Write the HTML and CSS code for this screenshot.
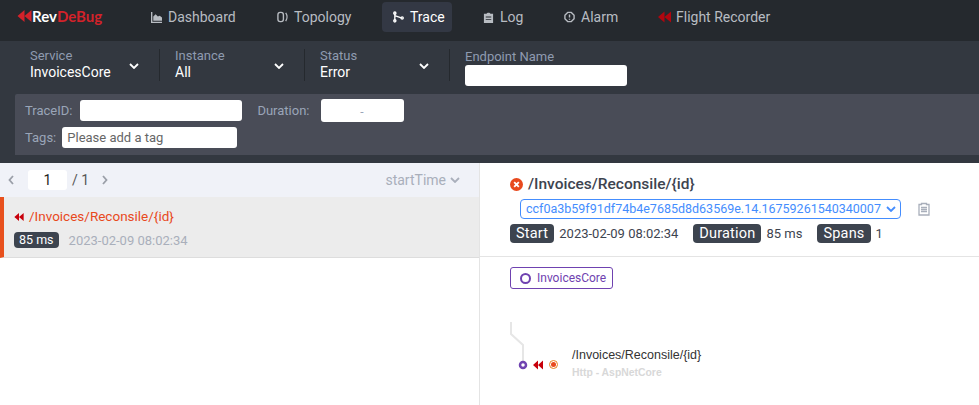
FILE: index.html
```html
<!DOCTYPE html>
<html>
	<head>
		<meta charset="utf-8">
		<title>RevDeBug Trace</title>
		<link rel="stylesheet" href="styles.css">
	</head>
	<body>
		<svg class="defs" width="0" height="0">
			<symbol id="rewind" viewBox="0 0 14 12">
				<path d="M7 0V12L0 6Z M14 0V12L7 6Z"/>
			</symbol>
			<symbol id="chev" viewBox="0 0 10 6">
				<path d="M1 1L5 5L9 1" fill="none" stroke="currentColor" stroke-width="1.8"/>
			</symbol>
		</svg>

		<header class="topbar">
			<a class="logo"><svg class="logo-icon"><use href="#rewind"/></svg><span class="logo-rev">Rev</span><span class="logo-bug">DeBug</span></a>
			<nav class="menu">
				<a class="menu-item m-dash">
					<svg class="ico" viewBox="0 0 12 12"><path d="M0 0H1.500V10.500H12V12H0Z M2.500 9.500V5L5 2.500L7.500 5L9.500 4L12 6V9.500Z"/></svg>
					Dashboard
				</a>
				<a class="menu-item m-topo">
					<svg class="ico-line" viewBox="0 0 12 12"><rect x="1" y="1" width="6" height="10" rx="2.500"/><path d="M9.500 1.500C11.300 4 11.300 8 9.500 10.500"/></svg>
					Topology
				</a>
				<a class="menu-item m-trace active">
					<svg class="ico-line" viewBox="0 0 12 12"><path d="M2 2V10M2 4.500L9 7"/><circle cx="2" cy="1.800" r="1.200"/><circle cx="2" cy="10.200" r="1.200"/><circle cx="10" cy="7" r="1.200"/></svg>
					Trace
				</a>
				<a class="menu-item m-log">
					<svg class="ico" viewBox="0 0 12 12"><path d="M1 2H4C4 .5 8 .5 8 2H11V12H1Z M3 5V6H9V5Z M3 7.500V8.500H9V7.500Z" fill-rule="evenodd"/></svg>
					Log
				</a>
				<a class="menu-item m-alarm">
					<svg class="ico-line" viewBox="0 0 12 12"><path d="M4 1H8L11 4V8L8 11H4L1 8V4Z" stroke-linejoin="round"/><path d="M6 3.200V6.500M6 7.800V9"/></svg>
					Alarm
				</a>
				<a class="menu-item m-flight">
					<svg class="ico-flight"><use href="#rewind"/></svg>
					Flight Recorder
				</a>
			</nav>
		</header>

		<section class="filters">
			<div class="selectors">
				<div class="sel">
					<div>
						<div class="sel-label">Service</div>
						<div class="sel-value">InvoicesCore</div>
					</div>
					<svg class="sel-chev"><use href="#chev"/></svg>
				</div>
				<div class="sel">
					<div>
						<div class="sel-label">Instance</div>
						<div class="sel-value">All</div>
					</div>
					<svg class="sel-chev"><use href="#chev"/></svg>
				</div>
				<div class="sel">
					<div>
						<div class="sel-label">Status</div>
						<div class="sel-value">Error</div>
					</div>
					<svg class="sel-chev"><use href="#chev"/></svg>
				</div>
				<div class="endpoint">
					<div class="sel-label">Endpoint Name</div>
					<div class="box endpoint-box"></div>
				</div>
			</div>
			<div class="search">
				<div class="search-row">
					<span class="search-label">TraceID:</span>
					<div class="box trace-box"></div>
					<span class="search-label duration-label">Duration:</span>
					<div class="box duration-box">-</div>
				</div>
				<div class="search-row tags-row">
					<span class="search-label">Tags:</span>
					<div class="box tags-box">Please add a tag</div>
				</div>
			</div>
		</section>

		<main class="content">
			<aside class="list">
				<div class="pager">
					<svg class="pager-arrow" viewBox="0 0 6 10"><path d="M5 1L1.500 5L5 9"/></svg>
					<div class="page-input">1</div>
					<span class="page-total">/ 1</span>
					<svg class="pager-arrow next" viewBox="0 0 6 10"><path d="M1 1L4.500 5L1 9"/></svg>
					<span class="sort">startTime<svg class="sort-chev"><use href="#chev"/></svg></span>
				</div>
				<div class="trace-item">
					<div class="trace-name"><svg class="ico-small"><use href="#rewind"/></svg>/Invoices/Reconsile/{id}</div>
					<div class="trace-meta"><span class="tag tag-small">85 ms</span><span class="trace-time">2023-02-09 08:02:34</span></div>
				</div>
			</aside>

			<section class="detail">
				<div class="detail-head">
					<h5 class="detail-title">
						<svg class="err-icon" viewBox="0 0 14 14"><circle cx="7" cy="7" r="7" fill="#e8491d"/><path d="M4.500 4.500L9.500 9.500M9.500 4.500L4.500 9.500" stroke="#fff" stroke-width="2"/></svg>
						/Invoices/Reconsile/{id}
					</h5>
					<div class="trace-select-row">
						<div class="trace-select">ccf0a3b59f91df74b4e7685d8d63569e.14.16759261540340007<svg class="select-chev"><use href="#chev"/></svg></div>
						<svg class="copy-icon" viewBox="0 0 12 14"><path d="M1 2.500H3.500V1.500H8.500V2.500H11V13H1Z M3 5.500H9M3 7.500H9M3 9.500H9" fill="none" stroke="#a9afbb" stroke-width="1.300"/></svg>
					</div>
					<div class="stats">
						<span class="tag">Start</span><span class="stat-val stat-start">2023-02-09 08:02:34</span>
						<span class="tag">Duration</span><span class="stat-val stat-dur">85 ms</span>
						<span class="tag">Spans</span><span class="stat-val stat-spans">1</span>
					</div>
				</div>
				<div class="detail-body">
					<div class="chip"><i class="chip-dot"></i>InvoicesCore</div>
					<div class="span-row">
						<svg class="span-tree" width="50" height="50" viewBox="0 0 50 50">
							<path d="M1 0V12L13 23V40" fill="none" stroke="#e6e6e6" stroke-width="2"/>
							<circle cx="13" cy="43" r="3" fill="#fff" stroke="#6f42b0" stroke-width="2.500"/>
							<path d="M28 38.500V47.500L23 43Z M33 38.500V47.500L28 43Z" fill="#c7000b"/>
							<circle cx="43.500" cy="42.500" r="4" fill="#fff" stroke="#e8801d" stroke-width="1"/>
							<circle cx="43.500" cy="42.500" r="2.500" fill="#e8491d"/>
						</svg>
						<div class="span-text">
							<div class="span-name">/Invoices/Reconsile/{id}</div>
							<div class="span-type">Http - AspNetCore</div>
						</div>
					</div>
				</div>
			</section>
		</main>
	</body>
</html>
```

FILE: styles.css
```css
* {
	margin: 0;
	padding: 0;
	box-sizing: border-box;
}

html, body {
	height: 405px;
	overflow: hidden;
}

body {
	font-family: Roboto, "Noto Sans", sans-serif;
	font-size: 13px;
	background-color: #fff;
	color: #3d444f;
}

.defs {
	position: absolute;
}

/* top bar */
.topbar {
	height: 41px;
	background-color: #25292e;
	display: flex;
	align-items: flex-start;
}
.logo {
	width: 151px;
	height: 32px;
	padding-left: 17px;
	display: flex;
	align-items: center;
	font-family: "Lato", sans-serif;
	font-size: 15px;
	font-weight: 700;
}
.logo-icon {
	width: 15px;
	height: 12px;
	fill: #d3222a;
}
.logo-rev {
	color: #fff;
}
.logo-bug {
	color: #d3222a;
}
.menu {
	display: flex;
	padding-top: 2px;
}
.menu-item {
	height: 30px;
	display: flex;
	align-items: center;
	gap: 6px;
	font-size: 14px;
	color: #b8bcc2;
	border-radius: 4px;
}
.menu-item.active {
	background-color: #333844;
	color: #fff;
	padding-left: 11px;
}
.ico {
	width: 11px;
	height: 11px;
	flex-shrink: 0;
	fill: currentColor;
}
.ico-line {
	width: 11px;
	height: 12px;
	flex-shrink: 0;
	fill: none;
	stroke: currentColor;
	stroke-width: 1.500;
}
.m-dash {
	width: 126px;
}
.m-topo {
	width: 105px;
}
.m-trace {
	width: 70px;
}
.m-log {
	width: 81px;
	margin-left: 31px;
}
.m-alarm {
	width: 94px;
}
.m-flight {
	gap: 5px;
}
.ico-flight {
	width: 13px;
	height: 12px;
	fill: #b0060f;
}

/* filters */
.filters {
	height: 122px;
	background-color: #333840;
	padding: 8px 0 0 15px;
}
.selectors {
	display: flex;
	height: 45px;
}
.sel {
	width: 145px;
	height: 32px;
	padding-left: 15px;
	padding-right: 20px;
	display: flex;
	justify-content: space-between;
	align-items: center;
	border-right: 1px solid #25292e;
}
.sel-label {
	font-size: 13px;
	line-height: 13px;
	margin-bottom: 2px;
	color: #8f9bb0;
}
.sel-value {
	font-size: 14px;
	line-height: 17px;
	color: #fff;
}
.sel-chev {
	width: 10px;
	height: 6px;
	color: #fff;
	margin-top: 1px;
}
.endpoint {
	padding-left: 15px;
	margin-top: 1px;
}
.endpoint-box {
	width: 162px;
	height: 21px;
	margin-top: 2px;
}
.box {
	background-color: #fff;
	border-radius: 3px;
}
.search {
	height: 61px;
	background-color: #494c57;
	padding: 5px 10px;
	border-top-left-radius: 2px;
}
.search-row {
	display: flex;
	align-items: center;
	height: 22px;
}
.tags-row {
	margin-top: 5px;
}
.search-label {
	font-size: 13px;
	color: #9aa5b8;
}
.trace-box {
	width: 162px;
	height: 21px;
	margin-left: 8px;
}
.duration-label {
	margin-left: 15px;
}
.duration-box {
	width: 83px;
	height: 23px;
	margin-left: 11px;
	text-align: center;
	line-height: 27px;
	font-size: 12px;
	color: #9aa5b8;
}
.tags-box {
	width: 175px;
	height: 21px;
	margin-left: 6px;
	padding-left: 5px;
	font-size: 13px;
	line-height: 21px;
	color: #666;
}

/* main split */
.content {
	height: 242px;
	display: flex;
}
.list {
	width: 480px;
	border-right: 1px solid #e4e4e4;
}
.pager {
	height: 34px;
	background-color: #f0f2f8;
	display: flex;
	align-items: center;
	padding-left: 8px;
}
.pager-arrow {
	width: 6px;
	height: 10px;
	fill: none;
	stroke: #9a9fa8;
	stroke-width: 1.800;
}
.pager-arrow.next {
	margin-left: 13px;
}
.page-input {
	width: 39px;
	height: 20px;
	margin-left: 14px;
	background-color: #fff;
	border-radius: 3px;
	text-align: center;
	line-height: 20px;
	font-size: 14px;
	color: #222;
}
.page-total {
	margin-left: 5px;
	font-size: 14px;
	color: #555;
}
.sort {
	margin-left: auto;
	margin-right: 19px;
	display: flex;
	align-items: center;
	gap: 4px;
	font-size: 14px;
	color: #a9afbb;
}
.sort-chev {
	width: 10px;
	height: 6px;
	color: #a9afbb;
}
.trace-item {
	height: 61px;
	background-color: #ececec;
	border-left: 4px solid #e8501d;
	border-bottom: 1px solid #ddd;
	padding: 9px 0 0 10px;
}
.trace-name {
	display: flex;
	align-items: center;
	gap: 5px;
	font-size: 13.500px;
	line-height: 21px;
	color: #e8491d;
}
.ico-small {
	width: 10px;
	height: 8px;
	fill: #c7000b;
}
.trace-meta {
	display: flex;
	align-items: center;
	margin-top: 5px;
}
.tag {
	background-color: #3d444f;
	color: #fff;
	border-radius: 4px;
	padding: 0 6px;
	height: 19px;
	line-height: 19px;
	font-size: 14.500px;
	letter-spacing: .2px;
}
.tag-small {
	height: 16px;
	line-height: 16px;
	font-size: 12.500px;
	padding: 0 5px;
	letter-spacing: 0;
}
.trace-time {
	margin-left: 10px;
	font-size: 13px;
	color: #a9afbb;
}

/* detail */
.detail {
	flex: 1;
}
.detail-head {
	height: 94px;
	padding: 11px 0 0 30px;
	border-bottom: 1px solid #e4e4e4;
}
.detail-title {
	display: flex;
	align-items: center;
	gap: 5px;
	font-size: 15.500px;
	line-height: 20px;
	font-weight: 500;
	color: #3d444f;
}
.err-icon {
	width: 13px;
	height: 13px;
}
.trace-select-row {
	display: flex;
	align-items: center;
	margin-left: 10px;
	margin-top: 5px;
}
.trace-select {
	width: 381px;
	height: 20px;
	border: 1px solid #448dfe;
	border-radius: 4px;
	color: #448dfe;
	font-size: 12.500px;
	line-height: 18px;
	padding: 0 4px 0 5px;
	display: flex;
	justify-content: space-between;
	align-items: center;
}
.select-chev {
	width: 10px;
	height: 6px;
	flex-shrink: 0;
	color: #448dfe;
}
.copy-icon {
	width: 12px;
	height: 14px;
	margin-left: 17px;
}
.stats {
	display: flex;
	align-items: center;
	margin-top: 5px;
	font-size: 13px;
}
.stat-val {
	margin-left: 5px;
}
.stat-start {
	margin-right: 15px;
}
.stat-dur {
	margin-right: 15px;
}
.detail-body {
	padding: 10px 0 0 30px;
}
.chip {
	width: 103px;
	height: 22px;
	border: 1px solid #6f42b0;
	border-radius: 3px;
	display: flex;
	align-items: center;
	padding-left: 9px;
	gap: 6px;
	font-size: 12px;
	color: #6f42b0;
}
.chip-dot {
	width: 11px;
	height: 11px;
	border: 2px solid #6f42b0;
	border-radius: 50%;
}
.span-row {
	display: flex;
	margin-top: 33px;
}
.span-text {
	margin-left: 12px;
	margin-top: 25px;
}
.span-name {
	font-family: "Liberation Sans", sans-serif;
	font-size: 12.500px;
	line-height: 16px;
	color: #333;
}
.span-type {
	font-family: "Liberation Sans", sans-serif;
	font-size: 10.400px;
	font-weight: 700;
	line-height: 14px;
	margin-top: 3px;
	color: #d8d8d8;
}
```
